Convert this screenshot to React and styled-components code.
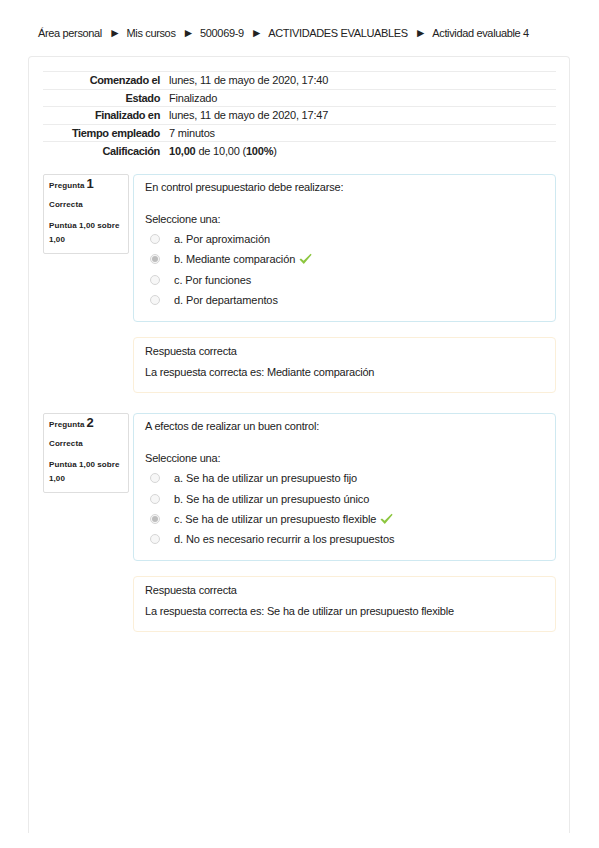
import React from "react";
import styled, { createGlobalStyle } from "styled-components";

const Global = createGlobalStyle`
  html, body { margin: 0; padding: 0; background: #fff; }
  body {
    font-family: "Liberation Sans", Arial, sans-serif;
    font-size: 11px;
    color: #222;
  }
`;

const Page = styled.div`
  width: 599px;
  height: 848px;
  overflow: hidden;
  padding: 0 29px 0 28px;
  box-sizing: border-box;
`;

const Crumbs = styled.nav`
  display: flex;
  align-items: center;
  gap: 5px;
  height: 14px;
  margin: 26px 0 16px 10px;
  font-size: 11px;
  letter-spacing: -0.35px;
  white-space: nowrap;
`;

const Arrow = styled.span`
  font-size: 12px;
  margin: 0 1px 0 2px;
`;

const Panel = styled.div`
  border: 1px solid #eaeaea;
  border-bottom: none;
  border-radius: 4px 4px 0 0;
  height: 777px;
  box-sizing: border-box;
  padding: 14px 13px 0 14px;
`;

const Summary = styled.table`
  width: 100%;
  border-collapse: collapse;
  margin-bottom: 15px;
`;

const Row = styled.tr`
  border-top: 1px solid #ececec;
  height: 17.5px;
`;

const Label = styled.th`
  width: 117px;
  text-align: right;
  padding: 0 4px 0 0;
  font-weight: bold;
  letter-spacing: -0.35px;
  white-space: nowrap;
`;

const Value = styled.td`
  padding: 0 0 0 5px;
  letter-spacing: -0.2px;
`;

const Question = styled.div`
  display: flex;
  align-items: flex-start;
  gap: 4px;
  margin-bottom: ${(p) => p.$gap}px;
`;

const Info = styled.div`
  width: 86px;
  height: 80px;
  box-sizing: border-box;
  border: 1px solid #dedede;
  border-radius: 2px;
  padding: 1px 4px 0 5px;
  font-size: 8px;
  font-weight: bold;
  letter-spacing: 0.1px;
`;

const QNo = styled.div`
  height: 16px;
  line-height: 16px;
  margin-bottom: 6px;
  span { font-size: 13px; margin-left: 2px; }
`;

const InfoLine = styled.div`
  line-height: 14px;
  margin-bottom: ${(p) => p.$mb || 0}px;
`;

const Main = styled.div`
  flex: 1;
  display: flex;
  flex-direction: column;
`;

const Formulation = styled.div`
  border: 1px solid #cfe9f1;
  border-radius: 4px;
  padding: 5px 12px 11px 11px;
  background: #fff;
`;

const QText = styled.div`
  line-height: 14px;
  margin-bottom: 18px;
  letter-spacing: -0.2px;
`;

const Prompt = styled.div`
  line-height: 14px;
  margin-bottom: 3px;
  letter-spacing: -0.2px;
`;

const Option = styled.div`
  display: flex;
  align-items: center;
  height: 20.3px;
  padding-left: 5px;
  letter-spacing: -0.1px;
`;

const Radio = styled.span`
  width: 10px;
  height: 10px;
  box-sizing: border-box;
  border-radius: 50%;
  border: 1px solid #d6d6d6;
  background: #f7f7f7;
  margin-right: 14px;
  display: flex;
  align-items: center;
  justify-content: center;
  &::after {
    content: "";
    width: 6px;
    height: 6px;
    border-radius: 50%;
    background: ${(p) => (p.$checked ? "#bdbdbd" : "transparent")};
  }
`;

const Check = styled.svg`
  width: 13px;
  height: 12px;
  margin-left: 4px;
`;

const Feedback = styled.div`
  margin-top: 15px;
  border: 1px solid #fbefd9;
  border-radius: 4px;
  padding: 3px 12px 9px 11px;
  div { line-height: 21px; letter-spacing: -0.2px; }
`;

const Tick = () => (
  <Check viewBox="0 0 13 12">
    <path d="M0.5 6.6 L2 5.4 L4.6 7.8 L11.6 0.8 L12.6 1.8 L4.8 11 Z" fill="#8cc63f" />
  </Check>
);

const questions = [
  {
    n: 1,
    text: "En control presupuestario debe realizarse:",
    options: [
      "a. Por aproximación",
      "b. Mediante comparación",
      "c. Por funciones",
      "d. Por departamentos",
    ],
    right: 1,
    answer: "Mediante comparación",
    gap: 20,
  },
  {
    n: 2,
    text: "A efectos de realizar un buen control:",
    options: [
      "a. Se ha de utilizar un presupuesto fijo",
      "b. Se ha de utilizar un presupuesto único",
      "c. Se ha de utilizar un presupuesto flexible",
      "d. No es necesario recurrir a los presupuestos",
    ],
    right: 2,
    answer: "Se ha de utilizar un presupuesto flexible",
    gap: 0,
  },
];

export default function App() {
  return (
    <Page>
      <Global />
      <Crumbs>
        <span>Área personal</span>
        <Arrow>►</Arrow>
        <span>Mis cursos</span>
        <Arrow>►</Arrow>
        <span>500069-9</span>
        <Arrow>►</Arrow>
        <span>ACTIVIDADES EVALUABLES</span>
        <Arrow>►</Arrow>
        <span>Actividad evaluable 4</span>
      </Crumbs>
      <Panel>
        <Summary>
          <tbody>
            <Row>
              <Label>Comenzado el</Label>
              <Value>lunes, 11 de mayo de 2020, 17:40</Value>
            </Row>
            <Row>
              <Label>Estado</Label>
              <Value>Finalizado</Value>
            </Row>
            <Row>
              <Label>Finalizado en</Label>
              <Value>lunes, 11 de mayo de 2020, 17:47</Value>
            </Row>
            <Row>
              <Label>Tiempo empleado</Label>
              <Value>7 minutos</Value>
            </Row>
            <Row>
              <Label>Calificación</Label>
              <Value>
                <b>10,00</b> de 10,00 (<b>100%</b>)
              </Value>
            </Row>
          </tbody>
        </Summary>

        {questions.map((q) => (
          <Question key={q.n} $gap={q.gap}>
            <Info>
              <QNo>
                Pregunta<span>{q.n}</span>
              </QNo>
              <InfoLine $mb={7}>Correcta</InfoLine>
              <InfoLine>Puntúa 1,00 sobre 1,00</InfoLine>
            </Info>
            <Main>
              <Formulation>
                <QText>{q.text}</QText>
                <Prompt>Seleccione una:</Prompt>
                {q.options.map((o, i) => (
                  <Option key={o}>
                    <Radio $checked={i === q.right} />
                    {o}
                    {i === q.right && <Tick />}
                  </Option>
                ))}
              </Formulation>
              <Feedback>
                <div>Respuesta correcta</div>
                <div>La respuesta correcta es: {q.answer}</div>
              </Feedback>
            </Main>
          </Question>
        ))}
      </Panel>
    </Page>
  );
}
